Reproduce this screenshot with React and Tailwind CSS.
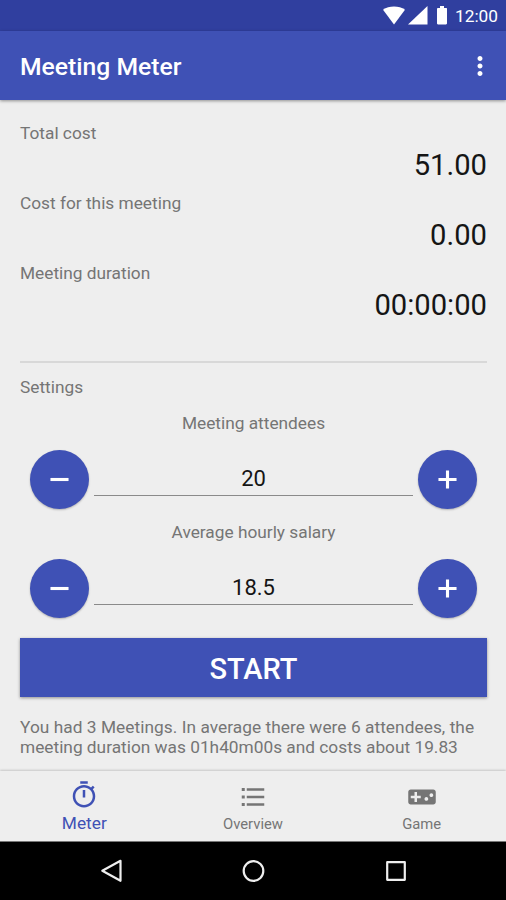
const MINUS = "M19 13.200H5v-2.400h14v2.400z";
const PLUS = "M19 13.200h-5.800V19h-2.400v-5.800H5v-2.400h5.800V5h2.400v5.800H19v2.400z";

function Icon({ d, className }) {
  return (
    <svg viewBox="0 0 24 24" fill="currentColor" className={className}>
      <path d={d} />
    </svg>
  );
}

function Metric({ label, value }) {
  return (
    <div className="h-[70px]">
      <div className="h-[25px] text-[17.3px] leading-5 text-[#757575]">{label}</div>
      <div className="text-right text-[29.2px] leading-[35px] text-[#151515]">{value}</div>
    </div>
  );
}

function RoundButton({ d, label }) {
  return (
    <button aria-label={label} className="flex size-[59px] shrink-0 items-center justify-center rounded-full bg-[#3f51b5] text-white shadow-[0_1px_2px_rgba(0,0,0,0.25)]">
      <Icon d={d} className="size-[31px]" />
    </button>
  );
}

function Stepper({ label, value }) {
  return (
    <div className="h-[109px]">
      <div className="text-center text-[17.3px] leading-5 text-[#757575]">{label}</div>
      <div className="mx-2.5 mt-[17px] flex gap-[5px]">
        <RoundButton d={MINUS} label="Decrease" />
        <div className="h-[46px] flex-1 border-b border-[#8a8a8a] pt-4 text-center text-[22px] leading-[26px] text-[#151515]">{value}</div>
        <RoundButton d={PLUS} label="Increase" />
      </div>
    </div>
  );
}

export default function App() {
  return (
    <div className="flex h-[900px] w-[506px] flex-col overflow-hidden bg-[#eeeeee] font-['Roboto',sans-serif]">
      <div className="flex h-[31px] shrink-0 items-center justify-end bg-[#303f9f] pr-2 text-white">
        <svg viewBox="0 0 68 24" className="h-6 w-[68px]" fill="currentColor">
          <path d="M1 5.8C7 1.5 17 1.5 23 5.8L12 20.5z" />
          <path d="M45.5 2v18.5H26z" />
          <path d="M58 2h4v2h2.200c.6 0 .8.4.8 1v14.300c0 .7-.4 1.200-1 1.200h-8c-.6 0-1-.5-1-1.200V5c0-.6.3-1 .9-1H58z" />
        </svg>
        <span className="ml-[5px] text-[17.3px] leading-5">12:00</span>
      </div>
      <div className="z-10 flex h-[69px] shrink-0 items-center justify-between bg-[#3f51b5] pl-5 pr-[11px] text-white shadow-[0_1px_3px_rgba(0,0,0,0.4)]">
        <h1 className="pt-0.5 text-[24.7px] font-medium leading-7">Meeting Meter</h1>
        <Icon className="size-[30px]" d="M12 8c1.1 0 2-.9 2-2s-.9-2-2-2-2 .9-2 2 .9 2 2 2zm0 2c-1.1 0-2 .9-2 2s.9 2 2 2 2-.9 2-2-.9-2-2-2zm0 6c-1.1 0-2 .9-2 2s.9 2 2 2 2-.9 2-2-.9-2-2-2z" />
      </div>
      <main className="h-[671px] shrink-0 pl-5 pr-[19px] pt-[23px]">
        <Metric label="Total cost" value="51.00" />
        <Metric label="Cost for this meeting" value="0.00" />
        <Metric label="Meeting duration" value="00:00:00" />
        <div className="mt-7 h-0.5 bg-[#d8d8d8]" />
        <div className="mt-3.5 h-9 text-[17.3px] leading-5 text-[#757575]">Settings</div>
        <Stepper label="Meeting attendees" value="20" />
        <Stepper label="Average hourly salary" value="18.5" />
        <button className="mt-[7px] block h-[59px] w-full bg-[#3f51b5] pt-px text-[29px] font-medium leading-[60px] text-white shadow-[0_1px_3px_rgba(0,0,0,0.4)]">START</button>
        <p className="mt-5 whitespace-nowrap text-[17.3px] leading-[20.3px] text-[#757575]">
          <span className="tracking-[0.05px]">You had 3 Meetings. In average there were 6 attendees, the</span>
          <br />
          meeting duration was 01h40m00s and costs about 19.83
        </p>
      </main>
      <nav className="grid h-[71px] shrink-0 grid-cols-3 border-b border-[#777777] shadow-[0_-1px_2px_rgba(0,0,0,0.16)]">
        <div className="flex flex-col items-center pt-[9px] text-[#3f51b5]">
          <Icon className="size-[30px]" d="M15 1H9v2h6V1zm-4 13h2V8h-2v6zm8.03-6.61l1.42-1.42c-.43-.51-.9-.99-1.41-1.41l-1.42 1.42C16.07 4.74 14.12 4 12 4c-4.97 0-9 4.03-9 9s4.02 9 9 9 9-4.03 9-9c0-2.12-.74-4.07-1.97-5.61zM12 20c-3.87 0-7-3.13-7-7s3.13-7 7-7 7 3.13 7 7-3.13 7-7 7z" />
          <span className="mt-[3px] text-[17.3px] leading-5">Meter</span>
        </div>
        <div className="flex flex-col items-center pt-[11px] text-[#757575]">
          <Icon className="size-[30px]" d="M3 7.200h2.400V4.800H3v2.400zm0 6h2.400v-2.400H3v2.400zm0 6h2.400v-2.400H3v2.400zM7 19h14v-2H7v2zm0-6h14v-2H7v2zm0-8v2h14V5H7z" />
          <span className="mt-[3px] text-[14.8px] leading-[18px]">Overview</span>
        </div>
        <div className="flex flex-col items-center pt-[11px] text-[#757575]">
          <Icon className="size-[30px]" d="M21 6H3c-1.100 0-2 .9-2 2v8c0 1.100.9 2 2 2h18c1.100 0 2-.9 2-2V8c0-1.100-.9-2-2-2zm-10 7H8v3H6v-3H3v-2h3V8h2v3h3v2zm4.500 2c-.83 0-1.500-.67-1.500-1.500s.67-1.500 1.500-1.500 1.500.67 1.500 1.500-.67 1.500-1.500 1.500zm4-3c-.83 0-1.500-.67-1.500-1.500S18.670 9 19.500 9s1.500.67 1.500 1.500-.67 1.500-1.500 1.500z" />
          <span className="mt-[3px] text-[14.8px] leading-[18px]">Game</span>
        </div>
      </nav>
      <div className="flex h-[58px] shrink-0 justify-center bg-black pt-[17px] text-[#eeeeee]">
        <svg viewBox="0 0 308 24" className="h-6 w-[308px]" fill="none" stroke="currentColor" strokeWidth="2.200" strokeLinejoin="round">
          <path d="M21.500 1.800v20L3.300 11.800z" />
          <circle cx="154.500" cy="12" r="9.800" />
          <rect x="288.200" y="3.200" width="17.600" height="17.600" />
        </svg>
      </div>
    </div>
  );
}
